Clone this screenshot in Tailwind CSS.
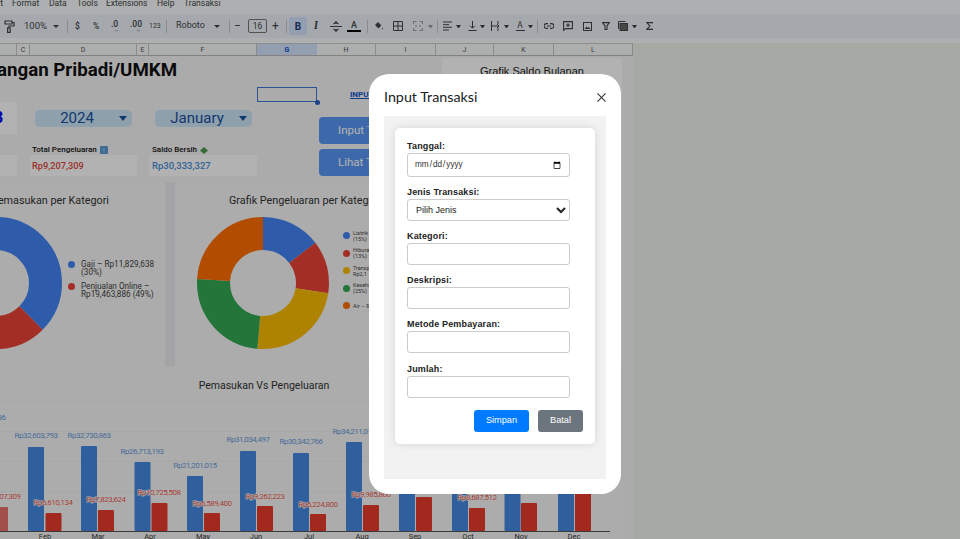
<!DOCTYPE html>
<html lang="en">
<head>
    <meta charset="UTF-8">
    <meta name="viewport" content="width=device-width, initial-scale=1.0">
    <title>Laporan Keuangan - Input Transaksi</title>
    <script src="https://cdn.jsdelivr.net/npm/@tailwindcss/browser@4"></script>
</head>
<body class="bg-[#f0f3ec] h-[539px] overflow-hidden font-['Roboto',sans-serif] text-[#444746]">

    <!-- Menu -->
    <div class="h-[14px] bg-[#f9fbfd] flex items-start text-[8.5px] leading-[7px] overflow-hidden">
        <div class="w-[12px] flex justify-end pr-[9px]"><span>t</span></div>
        <span class="w-[37px]">Format</span>
        <span class="w-[28px]">Data</span>
        <span class="w-[29px]">Tools</span>
        <span class="w-[51px]">Extensions</span>
        <span class="w-[27px]">Help</span>
        <span>Transaksi</span>
    </div>

    <!-- Toolbar -->
    <div class="h-[24px] bg-[#edf2fa] flex items-center text-[8.5px] text-[#444746]">
        <svg class="ml-[4px] w-[11px] h-[13px]" viewBox="0 0 11 13" fill="none" stroke="#444" stroke-width="1.2"><path d="M1 1h7v3H1zM8 2.5h2V6H5v2"/><rect x="3.6" y="8" width="2.6" height="4.4"/></svg>
        <span class="ml-[9px] w-[28px] text-[9.5px]">100%</span>
        <span class="ml-[1px] w-[6px] h-0 border-x-[3px] border-t-[3px] border-x-transparent border-t-[#444]"></span>
        <span class="ml-[8px] w-px h-[13px] bg-[#c7c7c7]"></span>
        <span class="ml-[7px] w-[18px] font-medium">$</span>
        <span class="w-[18px] font-medium">%</span>
        <span class="w-[19px] font-medium leading-[8px]">.0<span class="block text-[6px] leading-[4px] pl-[3px]">←</span></span>
        <span class="w-[19px] font-medium leading-[8px]">.00<span class="block text-[6px] leading-[4px] pl-[5px]">→</span></span>
        <span class="w-[17px] text-[7px]">123</span>
        <span class="w-px h-[13px] bg-[#c7c7c7]"></span>
        <span class="ml-[9px] w-[38px] text-[9px]">Roboto</span>
        <span class="w-[6px] h-0 border-x-[3px] border-t-[3px] border-x-transparent border-t-[#444]"></span>
        <span class="ml-[9px] w-px h-[13px] bg-[#c7c7c7]"></span>
        <span class="ml-[4px] w-[14px] text-[12px]">−</span>
        <span class="w-[19px] h-[14px] border border-[#747775] rounded-[2px] flex items-center justify-center text-[8.5px]">16</span>
        <span class="ml-[5px] w-[13px] text-[12px]">+</span>
        <span class="ml-[1px] w-px h-[13px] bg-[#c7c7c7]"></span>
        <span class="ml-[2px] w-[18px] h-[18px] bg-[#d3e3fd] rounded-[3px] flex items-center justify-center font-bold text-[10px] text-[#1f3b70]">B</span>
        <span class="ml-[7px] w-[15px] italic font-serif font-bold text-[11px]">I</span>
        <svg class="ml-[1px] w-[12px] h-[11px]" viewBox="0 0 12 11" fill="none" stroke="#444" stroke-width="1.1"><path d="M0 5.5h12M6 0v3M3.5 3 6 1l2.5 2M6 11V8M3.5 8 6 10l2.5-2"/></svg>
        <span class="ml-[5px] w-[14px] flex flex-col items-center text-[9px] leading-[9px] font-medium">A<span class="w-[14px] h-[2px] bg-black"></span></span>
        <span class="ml-[6px] w-px h-[13px] bg-[#c7c7c7]"></span>
        <svg class="ml-[6px] w-[10px] h-[10px]" viewBox="0 0 10 10" fill="#444"><path d="M1 4 4 1l3.4 3.4-3 3zM8.6 6.400c-.7 1-.9 1.400-.5 1.800.4.300.9 0 .9-.5 0-.3-.1-.7-.4-1.300z"/></svg>
        <svg class="ml-[9px] w-[10px] h-[10px]" viewBox="0 0 10 10" fill="none" stroke="#444" stroke-width="1"><path d="M.5.5h9v9h-9zM5 .5v9M.5 5h9"/></svg>
        <svg class="ml-[10px] w-[10px] h-[10px]" viewBox="0 0 10 10" fill="none" stroke="#9a9a9a" stroke-width="1"><path d="M.5 3V.5h3M6.500.5h3V3M.5 7v2.500h3M6.500 9.500h3V7M2 5h2M6 5h2"/></svg>
        <span class="ml-[4.5px] w-[5px] h-0 border-x-[2.5px] border-t-[3px] border-x-transparent border-t-[#999]"></span>
        <span class="ml-[4.5px] w-px h-[13px] bg-[#c7c7c7]"></span>
        <svg class="ml-[4.5px] w-[9px] h-[10px]" viewBox="0 0 9 10" stroke="#444"><path d="M0 1h9M0 3.700h6M0 6.300h9M0 9h6"/></svg>
        <span class="ml-[4px] w-[5px] h-0 border-x-[2.5px] border-t-[3px] border-x-transparent border-t-[#444]"></span>
        <svg class="ml-[7px] w-[9px] h-[10px]" viewBox="0 0 9 10" fill="none" stroke="#444"><path d="M.5 9.500h8M4.500 0v7M2 4.700l2.500 2.500L7 4.700"/></svg>
        <span class="ml-[3px] w-[5px] h-0 border-x-[2.5px] border-t-[3px] border-x-transparent border-t-[#444]"></span>
        <svg class="ml-[6px] w-[9px] h-[10px]" viewBox="0 0 9 10" fill="none" stroke="#444"><path d="M.5 0v10M7 0v3M7 7v3M1 5h7M6 3l2 2-2 2"/></svg>
        <span class="ml-[4px] w-[5px] h-0 border-x-[2.5px] border-t-[3px] border-x-transparent border-t-[#444]"></span>
        <span class="ml-[7px] w-[9px] flex flex-col items-center text-[8.5px] leading-[8px]">A<span class="w-[9px] h-px bg-[#444] mt-[1px]"></span></span>
        <span class="ml-[3px] w-[5px] h-0 border-x-[2.5px] border-t-[3px] border-x-transparent border-t-[#444]"></span>
        <span class="ml-[4.5px] w-px h-[13px] bg-[#c7c7c7]"></span>
        <svg class="ml-[6px] w-[10px] h-[6px]" viewBox="0 0 10 6" fill="none" stroke="#444" stroke-width="1.1"><path d="M4 .6H2.500a2.400 2.400 0 0 0 0 4.800H4M6 .6h1.500a2.400 2.400 0 0 1 0 4.800H6M3 3h4"/></svg>
        <svg class="ml-[9px] w-[10px] h-[10px]" viewBox="0 0 10 10" fill="none" stroke="#444" stroke-width="1.1"><path d="M.6.6h8.800v7H2.500L.6 9.400zM5 2.300v3.600M3.200 4.100h3.600"/></svg>
        <svg class="ml-[9.5px] w-[9px] h-[9px]" viewBox="0 0 9 9" fill="none" stroke="#444"><rect x=".5" y=".5" width="8" height="8"/><path d="M1.500 7 3.500 4.500 5 6l1-1 1.500 2z" fill="#444" stroke="none"/></svg>
        <svg class="ml-[10.5px] w-[8px] h-[8px]" viewBox="0 0 8 8" fill="none" stroke="#444" stroke-width="1.1"><path d="M.5.6h7L5 3.800V7.500H3V3.800z"/></svg>
        <svg class="ml-[8px] w-[10px] h-[10px]" viewBox="0 0 10 10" fill="none" stroke="#444"><path d="M.5 8V.5h7"/><rect x="2" y="2.500" width="7.500" height="7" fill="#666"/></svg>
        <span class="ml-[3.5px] w-[5px] h-0 border-x-[2.5px] border-t-[3px] border-x-transparent border-t-[#444]"></span>
        <svg class="ml-[9px] w-[7px] h-[8px]" viewBox="0 0 7 8" fill="none" stroke="#444" stroke-width="1.1"><path d="M6.500 1.500V.6H.8L4 4 .8 7.400h5.700v-.9"/></svg>
    </div>

    <div class="h-[5px] bg-[#f9fbfd]"></div>

    <!-- Column letters -->
    <div class="w-[633px] h-[13px] flex text-[7px] text-[#555] text-center leading-[12px] bg-[#f8f9fa] border-b border-[#bbb] border-t border-t-[#ccc]">
        <div class="w-[17px] border-r border-[#c4c7c5]"></div>
        <div class="w-[13px] border-r border-[#c4c7c5]">C</div>
        <div class="w-[107px] border-r border-[#c4c7c5]">D</div>
        <div class="w-[12px] border-r border-[#c4c7c5]">E</div>
        <div class="w-[108px] border-r border-[#c4c7c5]">F</div>
        <div class="w-[60px] bg-[#d3e3fd] font-bold text-[#0b57d0]">G</div>
        <div class="w-[59px] border-r border-[#c4c7c5]">H</div>
        <div class="w-[60px] border-r border-[#c4c7c5]">I</div>
        <div class="w-[58px] border-r border-[#c4c7c5]">J</div>
        <div class="w-[60px] border-r border-[#c4c7c5]">K</div>
        <div class="w-[79px] border-r border-[#c4c7c5]">L</div>
    </div>

    <!-- Sheet -->
    <div class="w-[633px] h-[483px] overflow-hidden bg-[#f5f5f5] grid grid-cols-[17px_13px_107px_12px_108px_60px_59px_60px_58px_60px_79px] grid-rows-[31px_15px_43px_31px_6px_184px_7px_166px]">

        <!-- Title -->
        <div class="col-start-1 col-span-5 row-start-1 flex justify-end items-end pr-[80px] pb-[5px] whitespace-nowrap text-[18.7px] leading-[24px] font-bold text-[#111] overflow-hidden">Laporan Keuangan Pribadi/UMKM</div>

        <!-- Selected cell -->
        <div class="col-start-6 row-start-2 border-[1.5px] border-[#3b76d8] relative">
            <span class="absolute -right-[3.5px] -bottom-[3.5px] w-[5px] h-[5px] rounded-full bg-[#2a5fc0]"></span>
        </div>
        <div class="col-start-7 row-start-2 pl-[33px] text-[8px] leading-[15px] font-bold text-[#1155cc] underline whitespace-nowrap">INPUT DATA</div>

        <!-- Year / month -->
        <div class="col-start-1 row-start-3 h-[32px] bg-white flex items-center font-bold text-[16px] text-[#0000ff] overflow-hidden"><span class="-ml-[6px]">3</span></div>
        <div class="col-start-3 row-start-3 ml-[5px] mr-[5px] mt-[8px] h-[17px] rounded-[5px] bg-[#cbe6f7] flex items-center text-[15px] text-[#1c4fa0]">
            <span class="flex-1 text-center">2024</span>
            <span class="mr-[5px] w-0 h-0 border-x-[4.5px] border-t-[5px] border-x-transparent border-t-[#1c4fa0]"></span>
        </div>
        <div class="col-start-5 row-start-3 ml-[6px] mr-[5px] mt-[8px] h-[17px] rounded-[5px] bg-[#cbe6f7] flex items-center text-[15px] text-[#1c4fa0]">
            <span class="flex-1 text-center">January</span>
            <span class="mr-[5px] w-0 h-0 border-x-[4.5px] border-t-[5px] border-x-transparent border-t-[#1c4fa0]"></span>
        </div>

        <!-- Buttons -->
        <div class="col-start-7 col-span-2 row-start-3 ml-[2px] mt-[15px] h-[27px] rounded-[4px] bg-[#5897f5] text-white text-[11.5px] leading-[27px] pl-[19px]">Input Transaksi</div>
        <div class="col-start-7 col-span-2 row-start-4 ml-[2px] mt-[4px] h-[27px] rounded-[4px] bg-[#5897f5] text-white text-[11.5px] leading-[27px] pl-[19px]">Lihat Transaksi</div>

        <!-- Totals -->
        <div class="col-start-1 row-start-4 mt-[10px] h-[21px] bg-white"></div>
        <div class="col-start-3 row-start-4 flex flex-col">
            <div class="h-[10px] pl-[2px] flex items-center gap-[3px] text-[8px] font-medium text-[#111] whitespace-nowrap">Total Pengeluaran
                <span class="w-[8px] h-[8px] bg-[#5b9bd5] rounded-[1px] text-white text-[6px] leading-[8px] text-center">↑</span>
            </div>
            <div class="h-[21px] bg-white pl-[2px] text-[9.2px] leading-[21px] font-medium text-[#e0453a]">Rp9,207,309</div>
        </div>
        <div class="col-start-5 row-start-4 flex flex-col">
            <div class="h-[10px] pl-[3px] flex items-center gap-[3px] text-[8px] font-medium text-[#111] whitespace-nowrap">Saldo Bersih
                <svg class="w-[8px] h-[7px]" viewBox="0 0 8 7"><path d="M0 3.500 4 0l4 3.500L4 7z" fill="#4e9a51"/></svg>
            </div>
            <div class="h-[21px] bg-white pl-[3px] text-[9.5px] leading-[21px] font-medium text-[#4a8fd8]">Rp30,333,327</div>
        </div>

        <!-- Saldo chart -->
        <div class="col-start-9 col-span-3 row-start-1 row-span-6 ml-[6px] mr-[11px] mt-[2px] bg-white text-center font-['Liberation_Sans',sans-serif] text-[11px] text-[#222] pt-[5px]">Grafik Saldo Bulanan</div>

        <!-- Donut charts -->
        <div class="col-start-1 col-span-8 row-start-6 flex gap-[10px] bg-[#ebebf0]">
            <div class="w-[165px] bg-[#f6f6f6] overflow-hidden flex flex-col">
                <div class="h-[35px] pt-[3px] flex justify-end items-center pr-[56px] whitespace-nowrap text-[10.8px] text-[#333]">Grafik Pemasukan per Kategori</div>
                <div class="flex">
                    <svg class="w-[132px] h-[132px] -ml-[70px] shrink-0 -rotate-90" viewBox="0 0 132 132" fill="none" stroke-width="33">
                        <circle cx="66" cy="66" r="49.5" pathLength="360" stroke="#4285f4" stroke-dasharray="255 105" stroke-dashoffset="120"/>
                        <circle cx="66" cy="66" r="49.5" pathLength="360" stroke="#ea4335" stroke-dasharray="60 300" stroke-dashoffset="-135"/>
                    </svg>
                    <div class="ml-[6px] mt-[43px] flex flex-col gap-[6px] text-[8.2px] leading-[8px] text-[#444] whitespace-nowrap">
                        <div class="flex gap-[6px]"><span class="w-[7px] h-[7px] mt-[1px] rounded-full bg-[#4285f4]"></span><span>Gaji – Rp11,829,638<br>(30%)</span></div>
                        <div class="flex gap-[6px]"><span class="w-[7px] h-[7px] mt-[1px] rounded-full bg-[#ea4335]"></span><span>Penjualan Online –<br>Rp19,463,886 (49%)</span></div>
                    </div>
                </div>
            </div>
            <div class="w-[261px] bg-[#f6f6f6] overflow-hidden flex flex-col">
                <div class="h-[35px] pt-[3px] flex items-center pl-[54px] whitespace-nowrap text-[10.8px] text-[#333]">Grafik Pengeluaran per Kategori</div>
                <div class="flex">
                    <svg class="w-[132px] h-[132px] ml-[22px] shrink-0 -rotate-90" viewBox="0 0 132 132" fill="none" stroke-width="33">
                        <circle cx="66" cy="66" r="49.5" pathLength="360" stroke="#4285f4" stroke-dasharray="52.5 307.5"/>
                        <circle cx="66" cy="66" r="49.5" pathLength="360" stroke="#ea4335" stroke-dasharray="46.5 313.5" stroke-dashoffset="-52.5"/>
                        <circle cx="66" cy="66" r="49.5" pathLength="360" stroke="#fbbc04" stroke-dasharray="86 274" stroke-dashoffset="-99"/>
                        <circle cx="66" cy="66" r="49.5" pathLength="360" stroke="#34a853" stroke-dasharray="88.5 271.5" stroke-dashoffset="-185"/>
                        <circle cx="66" cy="66" r="49.5" pathLength="360" stroke="#ff6d01" stroke-dasharray="86.5 273.5" stroke-dashoffset="-273.5"/>
                    </svg>
                    <div class="ml-[14px] mt-[12.5px] flex flex-col gap-[5.5px] text-[5.5px] leading-[6px] text-[#444] whitespace-nowrap">
                        <div class="h-[12px] flex gap-[3px] items-center"><span class="w-[7px] h-[7px] rounded-full bg-[#4285f4]"></span><span>Listrik –<br>(15%)</span></div>
                        <div class="h-[12px] flex gap-[3px] items-center"><span class="w-[7px] h-[7px] rounded-full bg-[#ea4335]"></span><span>Hiburan –<br>(13%)</span></div>
                        <div class="h-[12px] flex gap-[3px] items-center"><span class="w-[7px] h-[7px] rounded-full bg-[#fbbc04]"></span><span>Transportasi –<br>Rp2,1</span></div>
                        <div class="h-[12px] flex gap-[3px] items-center"><span class="w-[7px] h-[7px] rounded-full bg-[#34a853]"></span><span>Kesehatan –<br>(25%)</span></div>
                        <div class="h-[12px] flex gap-[3px] items-center"><span class="w-[7px] h-[7px] rounded-full bg-[#ff6d01]"></span><span>Air – Rp</span></div>
                    </div>
                </div>
            </div>
        </div>

        <!-- Bar chart -->
        <div class="col-start-1 col-span-11 row-start-8 mr-[11px] bg-[#f6f6f6] overflow-hidden">
            <div class="h-[26px] w-[528px] text-center text-[10.5px] leading-[26px] text-[#333]">Pemasukan Vs Pengeluaran</div>
            <svg class="w-[622px] h-[140px]" viewBox="0 0 622 140">
                <g stroke="#efefef"><path d="M0 2.5h610M0 32.5h610M0 62.5h610M0 92.5h610"/></g>
                <g fill="#4689e2">
                    <rect x="28" y="48" width="16" height="84" rx="1"/><rect x="81" y="47" width="16" height="85" rx="1"/>
                    <rect x="134.5" y="63" width="16" height="69" rx="1"/><rect x="187" y="77" width="16" height="55" rx="1"/>
                    <rect x="240" y="52" width="16" height="80" rx="1"/><rect x="293" y="54" width="16" height="78" rx="1"/>
                    <rect x="346" y="43" width="16" height="89" rx="1"/><rect x="399" y="30" width="16" height="102" rx="1"/>
                    <rect x="452" y="30" width="16" height="102" rx="1"/><rect x="504.5" y="30" width="16" height="102" rx="1"/>
                    <rect x="558" y="30" width="16" height="102" rx="1"/>
                </g>
                <g fill="#e93c2b">
                    <rect x="-8" y="108" width="16" height="24" rx="1" fill="#e8706a"/>
                    <rect x="45.5" y="114" width="16" height="18" rx="1"/><rect x="98" y="111" width="16" height="21" rx="1"/>
                    <rect x="151.5" y="104" width="16" height="28" rx="1"/><rect x="204" y="114" width="16" height="18" rx="1"/>
                    <rect x="257" y="107" width="16" height="25" rx="1"/><rect x="310" y="115" width="16" height="17" rx="1"/>
                    <rect x="363" y="106" width="16" height="26" rx="1"/><rect x="416" y="98" width="16" height="34" rx="1"/>
                    <rect x="469" y="109" width="16" height="23" rx="1"/><rect x="521" y="104" width="16" height="28" rx="1"/>
                    <rect x="575" y="30" width="16" height="102" rx="1"/>
                </g>
                <path d="M0 132.5h610" stroke="#555"/>
                <g font-size="8" letter-spacing="-0.45" fill="#6a9cdc" text-anchor="middle">
                    <text x="-16" y="21">Rp39,540,636</text><text x="36" y="39">Rp32,603,793</text><text x="89" y="39">Rp32,730,863</text>
                    <text x="142" y="55">Rp26,713,193</text><text x="195" y="69">Rp21,201,015</text><text x="248" y="43">Rp31,034,497</text>
                    <text x="301" y="45">Rp30,342,766</text><text x="354" y="35">Rp34,211,018</text>
                </g>
                <g font-size="8" letter-spacing="-0.45" fill="#e8584c" text-anchor="middle" stroke="#fff" stroke-width="1.2" paint-order="stroke">
                    <text x="1" y="100">Rp9,207,309</text><text x="53" y="106">Rp6,610,134</text><text x="106" y="103">Rp7,823,624</text>
                    <text x="159" y="96">Rp10,725,508</text><text x="212" y="107">Rp6,589,400</text><text x="265" y="100">Rp9,262,223</text>
                    <text x="318" y="108">Rp6,224,800</text><text x="371" y="98">Rp9,985,866</text><text x="477" y="101">Rp8,687,512</text>
                </g>
                <g font-size="7.5" fill="#333" text-anchor="middle">
                    <text x="45" y="140">Feb</text><text x="98" y="140">Mar</text><text x="150" y="140">Apr</text><text x="203" y="140">May</text>
                    <text x="256" y="140">Jun</text><text x="309" y="140">Jul</text><text x="362" y="140">Aug</text><text x="415" y="140">Sep</text>
                    <text x="468" y="140">Oct</text><text x="521" y="140">Nov</text><text x="574" y="140">Dec</text>
                </g>
            </svg>
        </div>
    </div>

    <!-- Dialog -->
    <div class="fixed inset-0 bg-black/30">
        <div class="absolute left-[369px] top-[74px] w-[252px] h-[420px] bg-white rounded-[20px] px-[15px] flex flex-col">
            <div class="h-[42px] pt-[4px] flex items-center justify-between">
                <h2 class="font-['Lato',sans-serif] text-[14.3px] text-[#202124]">Input Transaksi</h2>
                <svg class="w-[9px] h-[9px]" viewBox="0 0 10 10" stroke="#333" stroke-width="1.2"><path d="M.5.5l9 9M9.5.5l-9 9"/></svg>
            </div>
            <div class="w-[222px] h-[363px] bg-[#f2f2f2] pt-[12px] pl-[11px] font-['Liberation_Sans',sans-serif]">
                <form class="w-[200px] h-[316px] bg-white rounded-[5px] shadow-[0_0_8px_rgba(0,0,0,0.12)] px-[12px] pt-[11px] text-[9px] text-[#222]">
                    <label class="block h-[14px] leading-[14px] font-bold tracking-[0.15px]">Tanggal:</label>
                    <input type="date" class="block w-[163px] h-[24px] px-[6px] border border-[#ccc] rounded-[3px] text-[8.2px] bg-white text-[#333]">
                    <label class="block mt-[8px] h-[14px] leading-[14px] font-bold tracking-[0.15px]">Jenis Transaksi:</label>
                    <select class="block w-[163px] h-[22px] px-[4px] border border-[#ccc] rounded-[3px] text-[9px] bg-white text-[#222] appearance-auto"><option>Pilih Jenis</option></select>
                    <label class="block mt-[8px] h-[14px] leading-[14px] font-bold tracking-[0.15px]">Kategori:</label>
                    <input type="text" class="block w-[163px] h-[22px] border border-[#ccc] rounded-[3px]">
                    <label class="block mt-[8px] h-[14px] leading-[14px] font-bold tracking-[0.15px]">Deskripsi:</label>
                    <input type="text" class="block w-[163px] h-[22px] border border-[#ccc] rounded-[3px]">
                    <label class="block mt-[8px] h-[14px] leading-[14px] font-bold tracking-[0.15px]">Metode Pembayaran:</label>
                    <input type="text" class="block w-[163px] h-[22px] border border-[#ccc] rounded-[3px]">
                    <label class="block mt-[9px] h-[14px] leading-[14px] font-bold tracking-[0.15px]">Jumlah:</label>
                    <input type="text" class="block w-[163px] h-[22px] border border-[#ccc] rounded-[3px]">
                    <div class="mt-[12px] flex justify-end gap-[9px]">
                        <button type="button" class="w-[55px] h-[22px] rounded-[3px] bg-[#007bff] text-white text-[9.2px]">Simpan</button>
                        <button type="button" class="w-[45px] h-[22px] rounded-[3px] bg-[#6c757d] text-white text-[9.2px]">Batal</button>
                    </div>
                </form>
            </div>
        </div>
    </div>
</body>
</html>
